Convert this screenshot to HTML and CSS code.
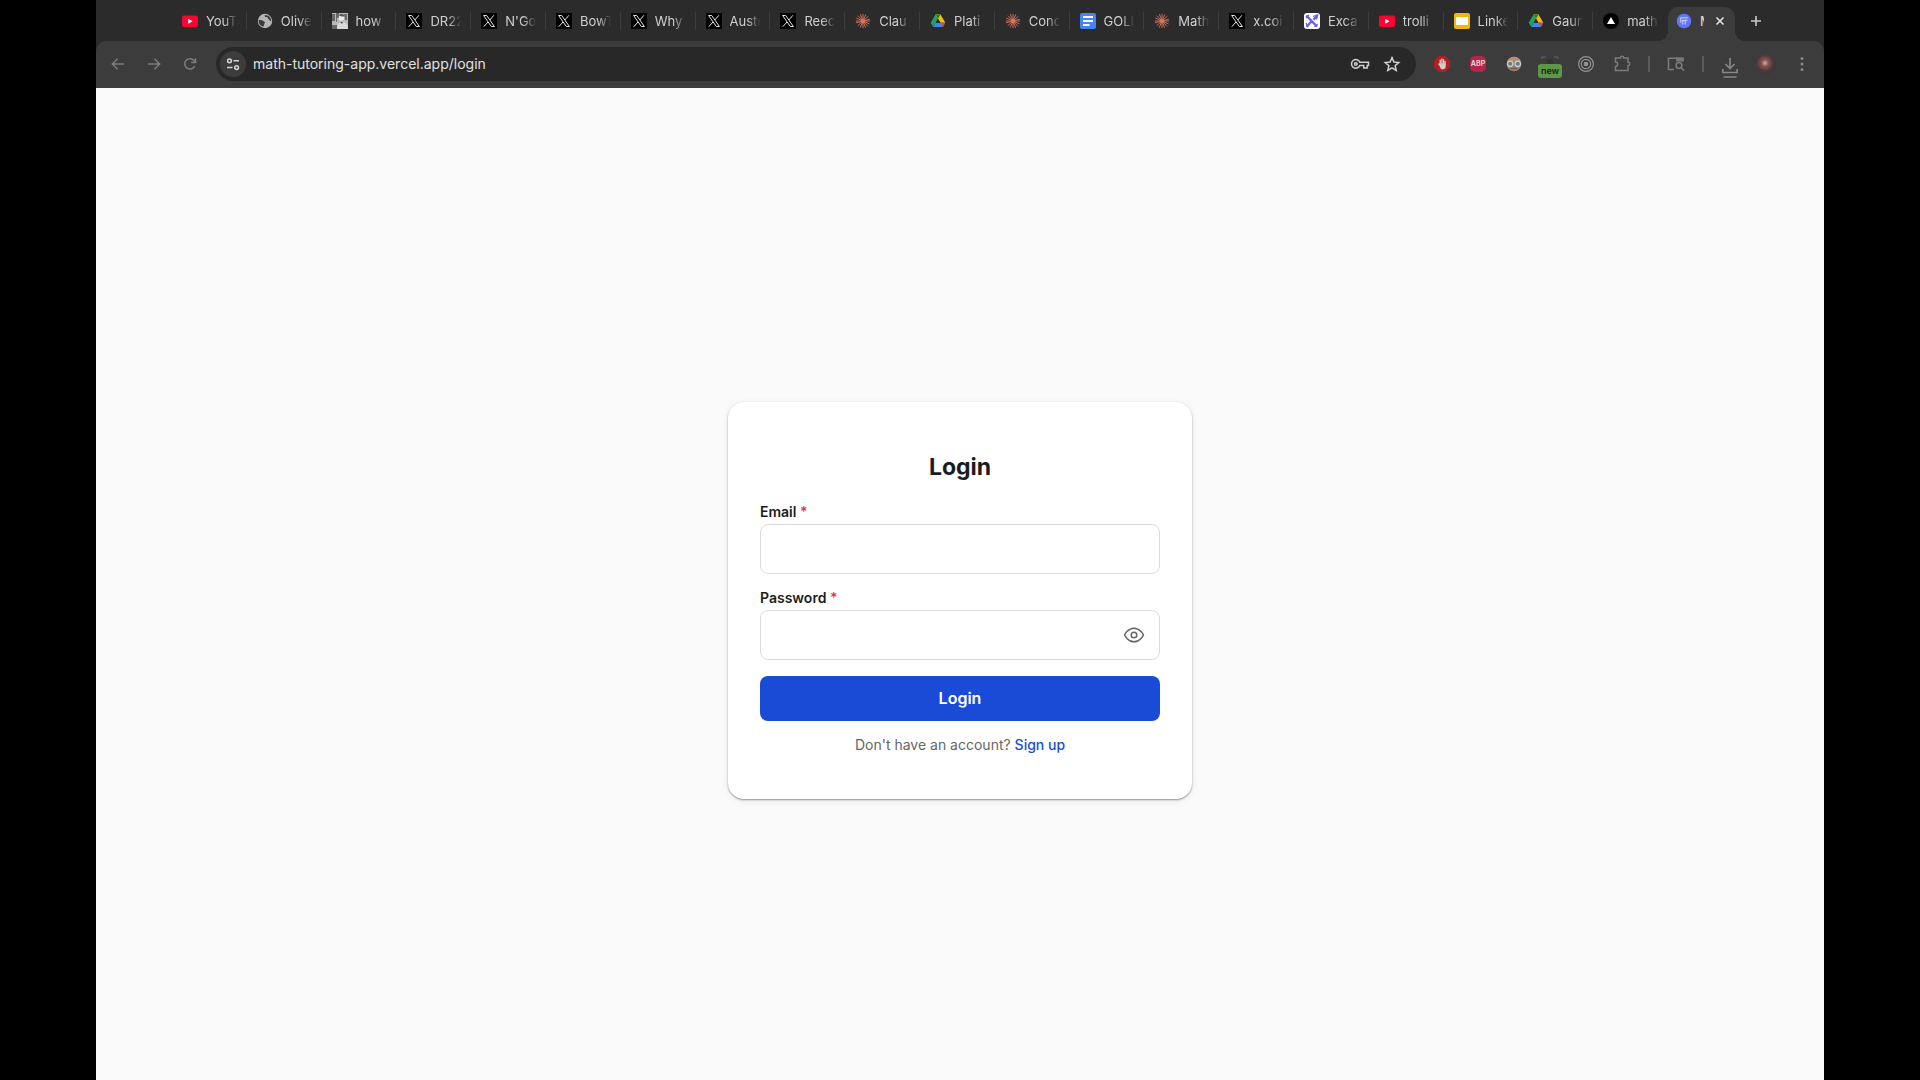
FILE: index.html
```html
<!DOCTYPE html>
<html lang="en">
<head>
  <meta charset="UTF-8">
  <meta name="viewport" content="width=device-width, initial-scale=1.0">
  <title>Login</title>
  <link rel="stylesheet" href="styles.css">
</head>
<body>
  <!-- Shared icons -->
  <svg class="sprite" aria-hidden="true">
    <symbol id="i-youtube" viewBox="0 0 16 16">
      <rect y="2.500" width="16" height="11.500" rx="2" fill="#fb0433"/>
      <path d="M6.2 5.800v4.900L10.600 8.200z" fill="#fff"/>
    </symbol>
    <symbol id="i-globe" viewBox="0 0 16 16">
      <circle cx="8" cy="8" r="7.2" fill="#b4b4b4"/>
      <path d="M1.800 7c2-.3 3.700.3 4.800 1.200 1.500.4 1.600 1.500.8 2.500-.7.900-.3 2-1.200 3C3.500 13 1.300 10.500 1.800 7zM7.800 2c-.5 1.300.4 2.200 1.700 2 1.600-.1 1 1.500 1.900 2 1.100.6 1 2 2.700 2.200C14.500 5 12 2 7.800 2z" fill="#3b3b3b"/>
    </symbol>
    <symbol id="i-photo" viewBox="0 0 16 16">
      <path d="M0 0h16v16H0z" fill="#b9b9b9"/>
      <path d="M0 1h3v7H0zM4 0h3v5H5v4H4zM12 1h3v6h-2zM0 12h5v4H0z" fill="#686868"/>
      <circle cx="9.500" cy="5" r="2.800" fill="#ececec"/>
      <path d="M5 16c0-5 2-7 5-7s6 2 6 5v2z" fill="#d9d9d9"/>
      <path d="M7 2.500c1-2 5-2 5.500 1L10 3.400zM8 9l3 0-1 2z" fill="#555"/>
    </symbol>
    <symbol id="i-x" viewBox="0 0 16 16">
      <path d="M0 0h16v16H0z" fill="#000"/>
      <path d="M2.600 2.500h3.100l7.700 11h-3.100z" fill="none" stroke="#e4e4e4"/>
      <path d="M12.900 2.300 8.800 7M7 9l-4.200 4.700" stroke="#e4e4e4"/>
    </symbol>
    <symbol id="i-claude" viewBox="0 0 16 16">
      <path d="M8 .8v14.400M.8 8h14.400M3 2.600l10 10.800M13.300 3.300 2.700 12.700M5.400 1.200l5.200 13.600M10.800 1.400 5.200 14.600M1.400 5l13.200 6M14.900 6.200 1.100 9.800" stroke="#d9755a" stroke-width=".9"/>
      <circle cx="8" cy="8" r="2.200" fill="#d9755a"/>
    </symbol>
    <symbol id="i-drive" viewBox="0 0 16 16">
      <path d="M5.500 1.500h5L8 5.800 3.300 14 .7 9.800z" fill="#1da261"/>
      <path d="M5.500 1.500h5l4.800 8.300h-4.900z" fill="#fbbc04"/>
      <path d="M5.500 1.500 8 5.800l2.500-4.300z" fill="#188038"/>
      <path d="M5.700 9.800h9.600L12.900 14H3.300z" fill="#4285f4"/>
      <path d="M10.400 9.800h4.900L12.900 14z" fill="#ea4335"/>
      <path d="M8 5.800 5.700 9.800h4.700z" fill="#2b2b2b"/>
    </symbol>
    <symbol id="i-docs" viewBox="0 0 16 16">
      <rect width="16" height="16" rx="2" fill="#4285f4"/>
      <path d="M3 4h10M3 8h10M3 12h6.500" stroke="#fff" stroke-width="1.800"/>
    </symbol>
    <symbol id="i-slides" viewBox="0 0 16 16">
      <rect width="16" height="16" rx="2" fill="#f2b50f"/>
      <path d="M2 4h12v8H2z" fill="#fff"/>
    </symbol>
    <symbol id="i-excali" viewBox="0 0 16 16">
      <rect width="16" height="16" rx="3" fill="#fff"/>
      <path d="M2.300 2.500 13 13.500M13.800 2 9.500 6.600M7 9l-4.500 4.800" stroke="#6965db" stroke-width="2.400"/>
      <path d="M9 3.500 13.500 2l-1 4.500M2 10l2 4M2 5l3-3M10.500 14l3-3" fill="none" stroke="#6965db" stroke-width="1.300"/>
    </symbol>
    <symbol id="i-vercel" viewBox="0 0 16 16">
      <circle cx="8" cy="8" r="8" fill="#000"/>
      <path d="M8 4l4 7H4z" fill="#fff"/>
    </symbol>
    <symbol id="i-app" viewBox="0 0 16 16">
      <circle cx="8" cy="8" r="7.300" fill="#6275f5"/>
      <path d="M4.500 4.800h7.500M6 7.300h5.500M6.800 7.300v4.200M9.300 7.300v4.200M4.800 4.800v5" fill="none" stroke="#dfe3ff" stroke-width=".9"/>
    </symbol>
  </svg>

  <div class="browser">
    <nav class="tab-strip" aria-label="Tabs">
      <div class="tabs">
        <a class="tab" href="#"><svg class="favicon"><use href="#i-youtube"/></svg><span>YouT</span></a>
        <a class="tab" href="#"><svg class="favicon"><use href="#i-globe"/></svg><span>Olive</span></a>
        <a class="tab" href="#"><svg class="favicon"><use href="#i-photo"/></svg><span>how</span></a>
        <a class="tab" href="#"><svg class="favicon"><use href="#i-x"/></svg><span>DR22</span></a>
        <a class="tab" href="#"><svg class="favicon"><use href="#i-x"/></svg><span>N'Go</span></a>
        <a class="tab" href="#"><svg class="favicon"><use href="#i-x"/></svg><span>BowT</span></a>
        <a class="tab" href="#"><svg class="favicon"><use href="#i-x"/></svg><span>Why</span></a>
        <a class="tab" href="#"><svg class="favicon"><use href="#i-x"/></svg><span>Auste</span></a>
        <a class="tab" href="#"><svg class="favicon"><use href="#i-x"/></svg><span>Reec</span></a>
        <a class="tab" href="#"><svg class="favicon"><use href="#i-claude"/></svg><span>Clau</span></a>
        <a class="tab" href="#"><svg class="favicon"><use href="#i-drive"/></svg><span>Plati</span></a>
        <a class="tab" href="#"><svg class="favicon"><use href="#i-claude"/></svg><span>Conc</span></a>
        <a class="tab" href="#"><svg class="favicon"><use href="#i-docs"/></svg><span>GOLI</span></a>
        <a class="tab" href="#"><svg class="favicon"><use href="#i-claude"/></svg><span>Math</span></a>
        <a class="tab" href="#"><svg class="favicon"><use href="#i-x"/></svg><span>x.coi</span></a>
        <a class="tab" href="#"><svg class="favicon"><use href="#i-excali"/></svg><span>Exca</span></a>
        <a class="tab" href="#"><svg class="favicon"><use href="#i-youtube"/></svg><span>trolli</span></a>
        <a class="tab" href="#"><svg class="favicon"><use href="#i-slides"/></svg><span>Linke</span></a>
        <a class="tab" href="#"><svg class="favicon"><use href="#i-drive"/></svg><span>Gaur</span></a>
        <a class="tab" href="#"><svg class="favicon"><use href="#i-vercel"/></svg><span>math</span></a>
      </div>
      <div class="tab-active">
        <svg class="favicon"><use href="#i-app"/></svg>
        <span>M</span>
        <button type="button" class="tab-close" aria-label="Close tab">
          <svg viewBox="0 0 10 10"><path d="M1.500 1.500l7 7M8.500 1.500l-7 7" stroke="#e3e3e3" stroke-width="1.600"/></svg>
        </button>
      </div>
      <button type="button" class="tab-new" aria-label="New tab">
        <svg viewBox="0 0 12 12"><path d="M6 1v10M1 6h10" stroke="#c9c9c9" stroke-width="1.600"/></svg>
      </button>
    </nav>

    <div class="toolbar">
      <button type="button" class="tool" aria-label="Back">
        <svg viewBox="0 0 20 20"><path d="M16 10H4.500M9.500 4.800 4.300 10l5.200 5.200" class="dim"/></svg>
      </button>
      <button type="button" class="tool" aria-label="Forward">
        <svg viewBox="0 0 20 20"><path d="M4 10h11.500M10.500 4.800l5.200 5.200-5.200 5.200" class="dim"/></svg>
      </button>
      <button type="button" class="tool" aria-label="Reload">
        <svg viewBox="0 0 20 20"><path d="M14.600 12.200A5.200 5.200 0 1 1 14 6.600l1.200 1.600M15.500 4.200v4.300h-4.300" class="dim"/></svg>
      </button>

      <div class="omnibox">
        <button type="button" class="site-info" aria-label="Site information">
          <svg viewBox="0 0 14 14"><g fill="none" stroke="#d6d6d6" stroke-width="1.500"><circle cx="3.500" cy="3.800" r="1.900"/><path d="M7.500 3.800H13M1 10.600h5.500"/><circle cx="10.600" cy="10.600" r="1.900"/></g></svg>
        </button>
        <input class="url" type="text" aria-label="Address" value="math-tutoring-app.vercel.app/login">
        <button type="button" class="tool" aria-label="Passwords">
          <svg viewBox="0 0 20 20"><g fill="none" stroke="#cfcfcf" stroke-width="1.500"><path d="M9.800 8.300H18.500v3.200h-1.300V14h-3.500v-2.500H9.800a4.300 4.300 0 1 1 0-3.200z"/><circle cx="5.800" cy="10" r="1.300"/></g></svg>
        </button>
        <button type="button" class="tool" aria-label="Bookmark">
          <svg viewBox="0 0 20 20"><path d="M10 3.600l1.900 4.500 4.900.4-3.700 3.200 1.100 4.700-4.200-2.500-4.200 2.500 1.100-4.700-3.700-3.200 4.900-.4z" fill="none" stroke="#cfcfcf" stroke-width="1.500"/></svg>
        </button>
      </div>

      <button type="button" class="tool" aria-label="AdBlock">
        <svg viewBox="0 0 20 20"><path d="M6.700 2h6.600L18 6.700v6.600L13.300 18H6.700L2 13.300V6.700z" fill="#ae2025"/><path d="M8.200 10V6.200M9.900 10V5M11.600 10V5.600M13.100 10.500V7.500M6.800 10l1.700 2" stroke="#d6cbc5" stroke-width="1.300" stroke-linecap="round"/><path d="M7.600 9.500h6.100v3c0 1.700-1.300 2.800-2.600 2.800h-.9c-1.600 0-2.600-2-2.600-5.800z" fill="#d6cbc5"/></svg>
      </button>
      <button type="button" class="tool abp" aria-label="Adblock Plus">ABP</button>
      <button type="button" class="tool" aria-label="Glasses extension">
        <svg viewBox="0 0 20 20"><circle cx="10" cy="10" r="7.300" fill="#9c7b66"/><path d="M3.300 7.500C5 1.300 15 1.300 16.700 7.500z" fill="#b28e76"/><g fill="#657f82" stroke="#c5cdcd" stroke-width="1.300"><circle cx="6.200" cy="9.800" r="2.700"/><circle cx="13.800" cy="9.800" r="2.700"/></g><path d="M7 14.500h6" stroke="#715745"/></svg>
      </button>
      <button type="button" class="tool ext-new" aria-label="New extension">
        <svg viewBox="0 0 20 20"><path d="M2 5V3h4M14 3h4v2" fill="none" stroke="#686868"/><path d="M7 5h6v5H7z" fill="#343434"/></svg>
        <span class="badge">new</span>
      </button>
      <button type="button" class="tool" aria-label="Target extension">
        <svg viewBox="0 0 20 20"><g fill="none" stroke="#929292" stroke-width="1.200"><circle cx="10" cy="10" r="7.400"/><circle cx="10" cy="10" r="4.700"/></g><circle cx="10" cy="10" r="2.300" fill="#929292"/></svg>
      </button>
      <button type="button" class="tool" aria-label="Extensions">
        <svg viewBox="0 0 20 20"><path d="M3.500 4h4.800a1.700 1.700 0 0 1 3.400 0H16v4.300a1.700 1.700 0 0 1 0 3.400V16.500H3.500v-4a2.200 2.200 0 0 0 0-4.400z" class="dim"/></svg>
      </button>
      <span class="divider"></span>
      <button type="button" class="tool" aria-label="Side panel search">
        <svg viewBox="0 0 20 20"><path d="M8 15.500H2.500V4.200H17v3" class="dim"/><path d="M10 3.500h7.700v4H10z" fill="#777"/><circle cx="13" cy="11.500" r="2.900" class="dim"/><path d="M15.200 13.700l3 3" class="dim"/></svg>
      </button>
      <span class="divider"></span>
      <button type="button" class="tool download" aria-label="Downloads">
        <svg viewBox="0 0 20 24"><path d="M10 4v10.500M5.500 10l4.500 4.500 4.500-4.500M2.800 15v3.500h14.400V15M3.500 23h13" fill="none" stroke="#858585" stroke-width="1.700"/></svg>
      </button>
      <button type="button" class="tool avatar" aria-label="Profile"></button>
      <button type="button" class="tool" aria-label="Menu">
        <svg viewBox="0 0 20 20"><g fill="#888"><circle cx="10" cy="4.500" r="1.500"/><circle cx="10" cy="10" r="1.500"/><circle cx="10" cy="15.500" r="1.500"/></g></svg>
      </button>
    </div>

    <main class="page">
      <form class="login-card">
        <h1>Login</h1>

        <label for="email">Email <span class="required">*</span></label>
        <input type="email" id="email" name="email" required>

        <label for="password">Password <span class="required">*</span></label>
        <div class="password-field">
          <input type="password" id="password" name="password" required>
          <button type="button" class="toggle-password" aria-label="Show password">
            <svg viewBox="0 0 24 24"><path d="M2.500 12s3.300-6.800 9.500-6.800 9.500 6.800 9.500 6.800-3.300 6.800-9.500 6.800S2.500 12 2.500 12z"/><circle cx="12" cy="12" r="2.800"/></svg>
          </button>
        </div>

        <button type="submit">Login</button>

        <p>Don't have an account? <a href="#">Sign up</a></p>
      </form>
    </main>
  </div>
</body>
</html>
```
FILE: styles.css
```css
* {
  box-sizing: border-box;
}

body {
  margin: 0;
  padding: 0 5%;
  background-color: #000;
  font-family: Inter, "Liberation Sans", sans-serif;
}

button {
  padding: 0;
  border: none;
  background: none;
  font-family: inherit;
  cursor: pointer;
}

svg {
  display: block;
}

.sprite {
  position: absolute;
  width: 0;
  height: 0;
}

.browser {
  display: flex;
  flex-direction: column;
  min-height: 100vh;
  background-color: #2b2b2b;
}

/* Tabs */
.tab-strip {
  display: flex;
  height: 41px;
  padding: 7px 62px 0 76px;
}

.tabs {
  display: flex;
  flex: 1;
  min-width: 0;
}

.tab {
  display: flex;
  flex: 1;
  align-items: center;
  gap: 8px;
  min-width: 0;
  height: 28px;
  padding: 0 8px 0 10px;
  color: #cfcfcf;
  font-size: 13px;
  text-decoration: none;
  background: linear-gradient(#3d3d3d, #3d3d3d) right center / 1px 18px no-repeat;
}

.tab:last-child {
  background: none;
}

.favicon {
  flex: none;
  width: 16px;
  height: 16px;
}

.tab span {
  flex: 1;
  min-width: 0;
  overflow: hidden;
  white-space: nowrap;
  -webkit-mask-image: linear-gradient(to right, #000 55%, transparent 95%);
  mask-image: linear-gradient(to right, #000 55%, transparent 95%);
}

.tab-active {
  position: relative;
  display: flex;
  align-items: center;
  width: 67px;
  padding: 0 10px 6px 8px;
  border-radius: 10px 10px 0 0;
  background-color: #3c3c3c;
  color: #e3e3e3;
  font-size: 13px;
}

.tab-active::before,
.tab-active::after {
  content: "";
  position: absolute;
  bottom: 0;
  width: 10px;
  height: 10px;
}

.tab-active::before {
  right: 100%;
  background: radial-gradient(circle at 0 0, transparent 10px, #3c3c3c 10px);
}

.tab-active::after {
  left: 100%;
  background: radial-gradient(circle at 100% 0, transparent 10px, #3c3c3c 10px);
}

.tab-active span {
  width: 4px;
  margin-left: 8px;
  overflow: hidden;
}

.tab-close {
  margin-left: auto;
}

.tab-close svg {
  width: 10px;
  height: 10px;
}

.tab-new {
  height: 28px;
  margin-left: 15px;
}

.tab-new svg {
  width: 12px;
  height: 12px;
}

/* Toolbar */
.toolbar {
  display: flex;
  align-items: center;
  gap: 16px;
  height: 47px;
  padding: 0 12px 2px;
  border-radius: 10px 10px 0 0;
  background-color: #3c3c3c;
}

.tool {
  flex: none;
  width: 20px;
  height: 20px;
}

.tool svg {
  width: 20px;
  height: 20px;
}

.tool.download svg {
  height: 24px;
}

.dim {
  fill: none;
  stroke: #7c7c7c;
  stroke-width: 1.5;
}

.omnibox {
  display: flex;
  flex: 1;
  align-items: center;
  gap: 12px;
  min-width: 0;
  height: 34px;
  padding: 0 14px 0 4px;
  border-radius: 17px;
  background-color: #282828;
}

.site-info {
  display: flex;
  flex: none;
  align-items: center;
  justify-content: center;
  width: 26px;
  height: 26px;
  border-radius: 50%;
  background-color: #3c3c3c;
}

.site-info svg {
  width: 14px;
  height: 14px;
}

.url {
  flex: 1;
  min-width: 0;
  margin-left: -5px;
  padding: 0;
  border: none;
  background: none;
  color: #e0e0e0;
  font-family: inherit;
  font-size: 14px;
}

.divider {
  width: 2px;
  height: 16px;
  background-color: #5a5a5a;
}

.abp {
  width: 16px;
  height: 16px;
  margin: 0 2px;
  border-radius: 5px;
  background-color: #b5244b;
  color: #e6cfd5;
  font-size: 7px;
  font-weight: 700;
}

.ext-new {
  position: relative;
}

.badge {
  position: absolute;
  top: 10px;
  left: -2px;
  width: 24px;
  border-radius: 3px;
  background-color: #5d9648;
  color: #142a0c;
  font-size: 9px;
  font-weight: 600;
  line-height: 14px;
  text-align: center;
}

.avatar {
  border-radius: 50%;
  background: radial-gradient(ellipse at 45% 45%, #c9b0ae 0, #8a5552 22%, #4f3a3b 50%, #383435 75%);
}

/* Login page */
.page {
  display: flex;
  flex: 1;
  align-items: center;
  justify-content: center;
  padding: 32px 16px 0;
  background-color: #fafafa;
}

.login-card {
  display: flex;
  flex-direction: column;
  width: 100%;
  max-width: 464px;
  padding: 48px 32px 44px;
  border-radius: 16px;
  background-color: #fff;
  box-shadow: 0 1px 2px rgba(0, 0, 0, 0.4), 0 2px 8px rgba(0, 0, 0, 0.06);
}

.login-card h1 {
  margin: 0 0 18px;
  color: #1c1c1e;
  font-size: 23px;
  font-weight: 700;
  line-height: 34px;
  text-align: center;
}

.login-card label {
  margin-bottom: 2px;
  color: #1c1c1e;
  font-size: 14px;
  font-weight: 600;
  line-height: 20px;
}

.required {
  color: #e5383b;
}

.login-card input {
  width: 100%;
  height: 50px;
  margin-bottom: 14px;
  padding: 0 16px;
  border: 1px solid #dcdcdc;
  border-radius: 8px;
  background-color: #fff;
  font-family: inherit;
  font-size: 16px;
}

.password-field {
  position: relative;
}

.password-field input {
  padding-right: 48px;
}

.toggle-password {
  position: absolute;
  top: 13px;
  right: 14px;
}

.toggle-password svg {
  width: 24px;
  height: 24px;
  fill: none;
  stroke: #666;
  stroke-width: 1.5;
}

button[type="submit"] {
  height: 45px;
  margin-top: 2px;
  border-radius: 8px;
  background-color: #1a4bd6;
  color: #fff;
  font-size: 16px;
  font-weight: 600;
}

.login-card p {
  margin: 14px 0 0;
  color: #666;
  font-size: 14px;
  line-height: 20px;
  text-align: center;
}

.login-card p a {
  color: #1a4bd6;
  font-weight: 500;
  text-decoration: none;
}
```
